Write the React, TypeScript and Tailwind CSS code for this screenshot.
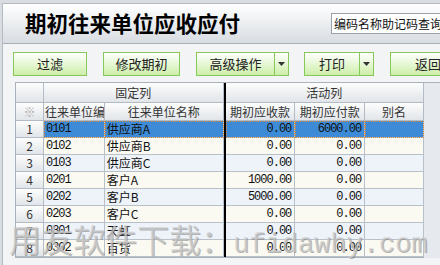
import React from "react";

interface Row {
  no: number;
  code: string;
  name: string;
  recv: string;
  pay: string;
}

const rows: Row[] = [
  { no: 1, code: "0101", name: "供应商A", recv: "0.00", pay: "6000.00" },
  { no: 2, code: "0102", name: "供应商B", recv: "0.00", pay: "0.00" },
  { no: 3, code: "0103", name: "供应商C", recv: "0.00", pay: "0.00" },
  { no: 4, code: "0201", name: "客户A", recv: "1000.00", pay: "0.00" },
  { no: 5, code: "0202", name: "客户B", recv: "5000.00", pay: "0.00" },
  { no: 6, code: "0203", name: "客户C", recv: "0.00", pay: "0.00" },
  { no: 7, code: "0301", name: "天虹", recv: "0.00", pay: "0.00" },
  { no: 8, code: "0302", name: "百货", recv: "0.00", pay: "0.00" },
];

const cjk = "font-['Noto_Sans_CJK_SC','Noto_Sans',sans-serif]";
const mono = "font-['Liberation_Mono','Noto_Sans_CJK_SC',monospace] text-[12px] tracking-[-1px]";
const hdr = "bg-gradient-to-b from-[#fdfdfd] to-[#e1e5e9] border-r border-b border-[#b3bbc4] flex items-center justify-center text-[12px] text-[#333]";

function Btn({ label, w, arrow }: { label: string; w: string; arrow?: boolean }) {
  return (
    <div className="flex h-[24px] shrink-0 border border-[#86c95a] bg-gradient-to-b from-[#ffffff] to-[#cdeea8] text-[13px] text-[#222]">
      <div className={`${w} flex items-center justify-center`}>{label}</div>
      {arrow && (
        <div className="w-[14px] border-l border-[#86c95a] flex items-center justify-center">
          <svg width="7" height="4" viewBox="0 0 7 4">
            <path d="M0 0h7L3.5 4z" fill="#333" />
          </svg>
        </div>
      )}
    </div>
  );
}

export default function App() {
  return (
    <div className={`relative w-[440px] h-[265px] overflow-hidden bg-[#d9dde1] pl-[2px] pt-[3px] ${cjk}`}>
      <div className="h-full border-l border-t border-[#b4bac1] bg-[#f2f4f6] overflow-hidden">
        {/* title */}
        <div className="flex h-[40px] items-center bg-gradient-to-b from-[#ffffff] to-[#d8dde2] border-b border-[#a7aeb6]">
          <div className="w-[328px] shrink-0 pl-[22px] text-[21.5px] font-bold text-black">
            期初往来单位应收应付
          </div>
          <div className="w-[120px] shrink-0 h-[21px] bg-white border border-[#9aa1a9] flex items-center pl-[2px] text-[12px] text-[#111] whitespace-nowrap">
            编码名称助记码查询
          </div>
        </div>

        {/* buttons */}
        <div className="flex gap-[16px] pl-[10px] pt-[8px]">
          <Btn label="过滤" w="w-[72px]" />
          <Btn label="修改期初" w="w-[75px]" />
          <Btn label="高级操作" w="w-[77px]" arrow />
          <div className="-ml-[1px]">
            <Btn label="打印" w="w-[54px]" arrow />
          </div>
          <Btn label="返回" w="w-[74px]" />
        </div>

        {/* grid */}
        <div className="ml-[12px] mt-[6px] flex bg-[#e6eaee]">
          <div className="w-[409px] shrink-0 border-l border-t border-[#a9b1ba] border-b">
            <div className="flex h-[20px]">
              <div className={`${hdr} w-[28px]`} />
              <div className={`${hdr} w-[180px]`}>固定列</div>
              <div className="w-[2px] bg-black" />
              <div className={`${hdr} w-[199px]`}>活动列</div>
            </div>
            <div className="flex h-[18px]">
              <div className={`${hdr} w-[28px] text-[#aaa] text-[11px]`}>※</div>
              <div className={`${hdr} w-[61px] !justify-start overflow-hidden whitespace-nowrap pl-[1px]`}>往来单位编码</div>
              <div className={`${hdr} w-[119px]`}>往来单位名称</div>
              <div className="w-[2px] bg-black" />
              <div className={`${hdr} w-[70px]`}>期初应收款</div>
              <div className={`${hdr} w-[70px]`}>期初应付款</div>
              <div className={`${hdr} w-[59px]`}>别名</div>
            </div>
            {rows.map((r) => {
              const sel = r.no === 1;
              const bg = sel ? "bg-[#3d8bd7]" : r.no % 2 === 0 ? "bg-[#fbfaf2]" : "bg-[#eef3fa]";
              const cell = `${bg} h-full border-r border-b border-[#b8c0c9] flex items-center whitespace-nowrap overflow-hidden text-[#111] ${sel ? "outline outline-1 outline-dotted outline-[#d88a3c] -outline-offset-1" : ""}`;
              return (
                <div key={r.no} className="flex h-[17px]">
                  <div className={`${hdr} w-[28px] h-full text-[12px]`}>{r.no}</div>
                  <div className={`${cell} w-[61px] pl-[2px] ${mono}`}>{r.code}</div>
                  <div className={`${cell} w-[119px] pl-[2px] text-[12px]`}>{r.name}</div>
                  <div className="w-[2px] h-full bg-black" />
                  <div className={`${cell} w-[70px] justify-end pr-[3px] ${mono}`}>{r.recv}</div>
                  <div className={`${cell} w-[70px] justify-end pr-[3px] ${mono}`}>{r.pay}</div>
                  <div className={`${cell} w-[59px]`} />
                </div>
              );
            })}
          </div>
          <div className="flex-1 border-t border-[#a9b1ba] h-[175px]" />
        </div>
      </div>

      {/* watermark */}
      <div className="absolute left-[9px] top-[214px] flex items-baseline whitespace-nowrap text-[rgba(205,205,205,0.7)] [text-shadow:1px_1px_0_rgba(120,120,120,0.55)]">
        <span className="text-[32px]">用友软件下载：</span>
        <span className="font-['Liberation_Mono',monospace] text-[27px]">ufidawhy.com</span>
      </div>
    </div>
  );
}
